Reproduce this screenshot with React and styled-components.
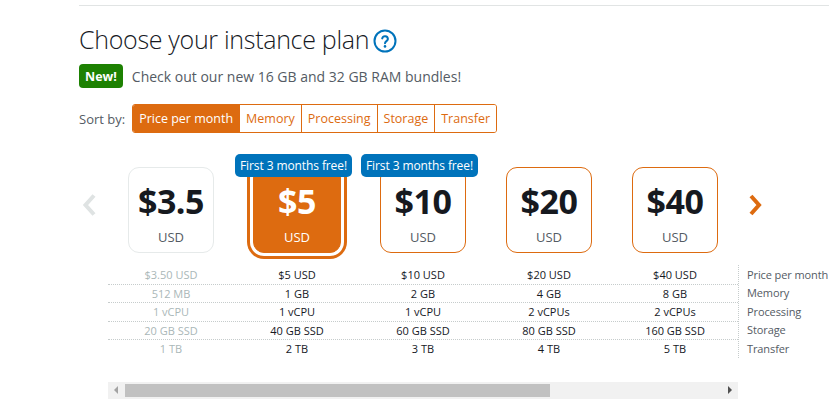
import React from "react";
import styled, { createGlobalStyle, css } from "styled-components";

const Global = createGlobalStyle`
  html, body { margin: 0; padding: 0; background: #fff; }
  body { font-family: "Open Sans", "Noto Sans", Arial, sans-serif; color: #16191f; }
`;

const ORANGE = "#dd6b10";

const Page = styled.div`
  padding: 5px 0 0 79px;
`;

const TopRule = styled.div`
  border-top: 1px solid #e1e4e4;
`;

const Title = styled.h1`
  margin: 15px 0 0;
  display: flex;
  align-items: center;
  gap: 4px;
  font-size: 25px;
  letter-spacing: -0.3px;
  font-weight: 300;
  color: #16191f;
  line-height: 37px;
`;

const InfoIcon = styled.svg`
  width: 24px;
  height: 24px;
  margin-top: 2px;
`;

const NewRow = styled.div`
  margin-top: 6px;
  display: flex;
  align-items: center;
  gap: 9px;
  font-size: 14px;
  color: #545b64;
`;

const NewBadge = styled.span`
  background: #1d8102;
  color: #fff;
  font-weight: 700;
  font-size: 12.5px;
  border-radius: 4px;
  height: 24px;
  padding: 0 6px;
  display: inline-flex;
  align-items: center;
`;

const SortRow = styled.div`
  margin-top: 16px;
  display: flex;
  align-items: center;
  gap: 7px;
  font-size: 13px;
  color: #545b64;
`;

const SortGroup = styled.div`
  display: flex;
  border: 1px solid ${ORANGE};
  border-radius: 3px;
  overflow: hidden;
`;

const SortButton = styled.button`
  font-family: inherit;
  font-size: 12.5px;
  height: 27px;
  padding: 0 6px;
  border: none;
  border-left: 1px solid ${ORANGE};
  background: ${(p) => (p.$active ? ORANGE : "#fff")};
  color: ${(p) => (p.$active ? "#fff" : ORANGE)};
  font-weight: ${(p) => (p.$active ? 500 : 400)};
  &:first-child { border-left: none; }
`;

const Carousel = styled.div`
  margin-top: 21px;
  display: flex;
  align-items: center;
`;

const ArrowBox = styled.div`
  width: ${(p) => p.$w}px;
  box-sizing: border-box;
  padding: 2px 0 0 ${(p) => p.$pad}px;
  display: flex;
`;

const Track = styled.div`
  display: grid;
  grid-template-columns: repeat(5, 126px);
  padding-top: 13px;
`;

const Column = styled.div`
  position: relative;
  display: flex;
  justify-content: center;
`;

const Card = styled.div`
  width: 86px;
  height: 86px;
  box-sizing: border-box;
  border-radius: 11px;
  display: flex;
  flex-direction: column;
  align-items: center;
  background: #fff;
  border: 1px solid ${(p) => (p.$muted ? "#e6eaea" : ORANGE)};
  ${(p) =>
    p.$selected &&
    css`
      background: ${ORANGE};
      border-color: ${ORANGE};
      box-shadow: 0 0 0 3px #fff, 0 0 0 6px ${ORANGE};
      width: 88px;
    `}
`;

const Price = styled.div`
  margin-top: 11px;
  font-size: 34px;
  font-weight: 700;
  line-height: 44px;
  letter-spacing: -0.5px;
  color: ${(p) => (p.$selected ? "#fff" : "#16191f")};
`;

const Currency = styled.div`
  margin-top: 6px;
  font-size: 13px;
  line-height: 16px;
  color: ${(p) => (p.$selected ? "#fff" : "#545b64")};
`;

const FreeBadge = styled.div`
  position: absolute;
  top: -13px;
  left: 1px;
  z-index: 2;
  background: #0073bb;
  color: #fff;
  font-size: 12px;
  font-weight: 500;
  letter-spacing: -0.1px;
  border-radius: 5px;
  height: 23px;
  padding: 0 5px;
  display: flex;
  align-items: center;
  white-space: nowrap;
`;

const Table = styled.div`
  margin-top: 12px;
  margin-left: 29px;
  display: flex;
`;

const Values = styled.div`
  width: 630px;
`;

const ValueRow = styled.div`
  display: grid;
  grid-template-columns: repeat(5, 126px);
  height: 18.5px;
  align-items: center;
  font-size: 11px;
  & + & { border-top: 1px dotted #c6cccc; height: 17.5px; }
`;

const Cell = styled.div`
  text-align: center;
  color: ${(p) => (p.$muted ? "#aab7b8" : "#16191f")};
`;

const Labels = styled.div`
  border-left: 1px dotted #c6cccc;
  padding-left: 8px;
`;

const Label = styled.div`
  height: 18.5px;
  display: flex;
  align-items: center;
  font-size: 11px;
  letter-spacing: -0.1px;
  white-space: nowrap;
  color: #545b64;
`;

const Scrollbar = styled.div`
  margin: 24px 0 0 29px;
  width: 630px;
  height: 17px;
  background: #f1f1f1;
  display: flex;
  align-items: center;
`;

const ScrollArrow = styled.div`
  width: 17px;
  height: 17px;
  display: flex;
  align-items: center;
  justify-content: center;
`;

const Thumb = styled.div`
  width: 425px;
  height: 13px;
  background: #c1c1c1;
`;

const Spacer = styled.div`
  flex: 1;
`;

const plans = [
  { price: "$3.5", muted: true, cells: ["$3.50 USD", "512 MB", "1 vCPU", "20 GB SSD", "1 TB"] },
  { price: "$5", selected: true, badge: true, cells: ["$5 USD", "1 GB", "1 vCPU", "40 GB SSD", "2 TB"] },
  { price: "$10", badge: true, cells: ["$10 USD", "2 GB", "1 vCPU", "60 GB SSD", "3 TB"] },
  { price: "$20", cells: ["$20 USD", "4 GB", "2 vCPUs", "80 GB SSD", "4 TB"] },
  { price: "$40", cells: ["$40 USD", "8 GB", "2 vCPUs", "160 GB SSD", "5 TB"] },
];

const labels = ["Price per month", "Memory", "Processing", "Storage", "Transfer"];
const sorts = ["Price per month", "Memory", "Processing", "Storage", "Transfer"];

export default function App() {
  return (
    <>
      <Global />
      <Page>
        <TopRule />
        <Title>
          Choose your instance plan
          <InfoIcon viewBox="0 0 24 24">
            <circle cx="12" cy="12" r="10.5" fill="none" stroke="#0073bb" strokeWidth="2" />
            <path d="M9.2 9.4a2.9 2.9 0 0 1 5.7.6c0 1.9-2.9 2.3-2.9 4.2" fill="none" stroke="#0073bb" strokeWidth="2" strokeLinecap="round" />
            <circle cx="12" cy="17.4" r="1.3" fill="#0073bb" />
          </InfoIcon>
        </Title>
        <NewRow>
          <NewBadge>New!</NewBadge>
          Check out our new 16 GB and 32 GB RAM bundles!
        </NewRow>
        <SortRow>
          Sort by:
          <SortGroup>
            {sorts.map((s, i) => (
              <SortButton key={s} $active={i === 0}>{s}</SortButton>
            ))}
          </SortGroup>
        </SortRow>
        <Carousel>
          <ArrowBox $w={29} $pad={1}>
            <svg width="18" height="24" viewBox="0 0 18 24">
              <path d="M14 2.5 L5.5 12 L14 21.5" fill="none" stroke="#dfe3e3" strokeWidth="4" strokeLinejoin="miter" />
            </svg>
          </ArrowBox>
          <Track>
            {plans.map((p) => (
              <Column key={p.price}>
                {p.badge && <FreeBadge>First 3 months free!</FreeBadge>}
                <Card $muted={p.muted} $selected={p.selected}>
                  <Price $selected={p.selected}>{p.price}</Price>
                  <Currency $selected={p.selected}>USD</Currency>
                </Card>
              </Column>
            ))}
          </Track>
          <ArrowBox $w={40} $pad={9}>
            <svg width="18" height="24" viewBox="0 0 18 24">
              <path d="M4 3 L12 12 L4 21" fill="none" stroke={ORANGE} strokeWidth="4" strokeLinejoin="miter" />
            </svg>
          </ArrowBox>
        </Carousel>
        <Table>
          <Values>
            {labels.map((l, r) => (
              <ValueRow key={l}>
                {plans.map((p) => (
                  <Cell key={p.price} $muted={p.muted}>{p.cells[r]}</Cell>
                ))}
              </ValueRow>
            ))}
          </Values>
          <Labels>
            {labels.map((l) => (
              <Label key={l}>{l}</Label>
            ))}
          </Labels>
        </Table>
        <Scrollbar>
          <ScrollArrow>
            <svg width="6" height="8" viewBox="0 0 6 8"><path d="M4 0 L0 4 L4 8 Z" fill="#a3a3a3" /></svg>
          </ScrollArrow>
          <Thumb />
          <Spacer />
          <ScrollArrow>
            <svg width="6" height="8" viewBox="0 0 6 8"><path d="M1 0 L5 4 L1 8 Z" fill="#505050" /></svg>
          </ScrollArrow>
        </Scrollbar>
      </Page>
    </>
  );
}
